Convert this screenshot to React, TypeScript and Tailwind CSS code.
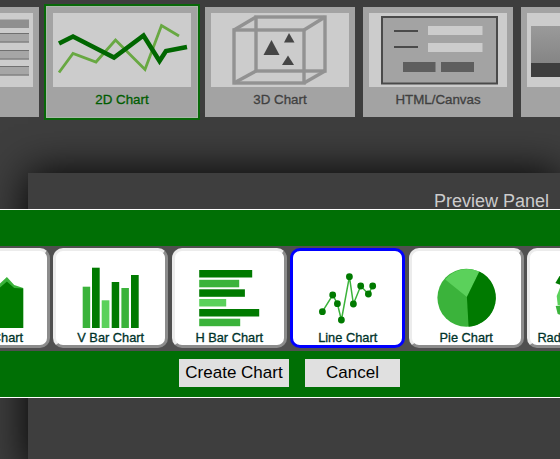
const DARK = "#007a00";
const MID = "#3bb33b";
const LIGHT = "#5bd15b";

function Chart2D() {
  return (
    <svg width={138} height={74} viewBox="53 13 138 74" className="block">
      <polyline points="59,72.5 73,53.5 96,62 115.5,40 145,69.5 161.5,25.5 179,36" fill="none" stroke="#68a842" strokeWidth={2.8} />
      <polyline points="59,43.5 73,36.5 114,57.5 143.5,35.5 159.5,61 166,51 187,47" fill="none" stroke="#006600" strokeWidth={4.6} />
    </svg>
  );
}

function Chart3D() {
  return (
    <svg width={138} height={74} viewBox="211 13 138 74" className="block">
      <g fill="none" stroke="#929292" strokeWidth={3.4}>
        <rect x={234} y={30} width={70} height={53} />
        <rect x={256} y={17} width={69} height={54} />
        <line x1={234} y1={30} x2={256} y2={17} />
        <line x1={304} y1={30} x2={325} y2={17} />
        <line x1={234} y1={83} x2={256} y2={71} />
        <line x1={304} y1={83} x2={325} y2={71} />
      </g>
      <g fill="#454545">
        <polygon points="263.5,55 279.5,55 271.5,40" />
        <polygon points="284,42.5 294.5,42.5 289,33" />
        <polygon points="282,65 294,65 288,55.5" />
      </g>
    </svg>
  );
}

function HtmlCanvas() {
  return (
    <svg width={138} height={74} viewBox="369 13 138 74" className="block">
      <rect x={382} y={17} width={115} height={66.5} fill="#a3a3a3" stroke="#4a4a4a" strokeWidth={2} />
      <line x1={394} y1={31} x2={418} y2={31} stroke="#4a4a4a" strokeWidth={2} />
      <line x1={394} y1={47} x2={418} y2={47} stroke="#4a4a4a" strokeWidth={2} />
      <rect x={428} y={26} width={54.5} height={9} fill="#cccccc" />
      <rect x={428} y={43} width={54.5} height={9} fill="#cccccc" />
      <rect x={403} y={62} width={32.5} height={10} fill="#5e5e5e" />
      <rect x={441} y={62} width={33} height={10} fill="#5e5e5e" />
    </svg>
  );
}

function Rows() {
  return (
    <svg width={138} height={74} viewBox="-105 13 138 74" className="block">
      <rect x={-105} y={19.5} width={134} height={8.5} fill="#8f8f8f" />
      {[33, 50, 66].map((y) => (
        <g key={y}>
          <rect x={-105} y={y} width={134} height={9.5} fill="#a6a6a6" />
          <line x1={-105} y1={y + 0.5} x2={29} y2={y + 0.5} stroke="#707070" />
          <line x1={-105} y1={y + 9} x2={29} y2={y + 9} stroke="#707070" />
        </g>
      ))}
    </svg>
  );
}

function Panels() {
  return (
    <svg width={138} height={74} viewBox="527 13 138 74" className="block">
      <defs>
        <linearGradient id="panelFill" x1="0" y1="0" x2="0" y2="1">
          <stop offset="0" stopColor="#9a9a9a" />
          <stop offset="1" stopColor="#858585" />
        </linearGradient>
      </defs>
      <rect x={531} y={26} width={130} height={37} fill="url(#panelFill)" />
      <rect x={531} y={63} width={130} height={14} fill="#3e3e3e" />
    </svg>
  );
}

type TopItem = { label: string; art: React.ReactNode; selected?: boolean };

const topItems: TopItem[] = [
  { label: "Table", art: <Rows /> },
  { label: "2D Chart", art: <Chart2D />, selected: true },
  { label: "3D Chart", art: <Chart3D /> },
  { label: "HTML/Canvas", art: <HtmlCanvas /> },
  { label: "Panels", art: <Panels /> },
];

function TopCard({ label, art, selected }: TopItem) {
  return (
    <div
      className={
        selected
          ? "w-[150px] h-[110px] shrink-0 bg-[#a3a3a3] p-[6px] shadow-[0_0_0_1px_#a9b9a9,0_0_0_3px_#086808]"
          : "w-[150px] h-[110px] shrink-0 bg-[#a3a3a3] p-[6px]"
      }
    >
      <div className="h-[74px] bg-[#cccccc] overflow-hidden">{art}</div>
      <div
        className={
          selected
            ? "mt-[5px] text-center text-[13.33px] leading-[16px] text-[#005c00] [-webkit-text-stroke:0.3px_#005c00]"
            : "mt-[5px] text-center text-[13.33px] leading-[16px] text-[#404040] [-webkit-text-stroke:0.3px_#404040]"
        }
      >
        {label}
      </div>
    </div>
  );
}

const icon = { width: 108.75, height: 80, className: "block" };

function AreaIcon() {
  return (
    <svg {...icon} viewBox="-62.2 251 108.75 80">
      <polygon points="-10,293 6.7,277 14,285 23,288 23,328 -10,328" fill={MID} />
      <polygon points="-10,296 6.7,281.5 14,288 23,288.5 23,328 -10,328" fill={DARK} />
    </svg>
  );
}

function VBarIcon() {
  const bars = [
    [83, 286.7, 7.5, MID],
    [92.3, 267.7, 7.7, DARK],
    [102, 300.3, 7.7, LIGHT],
    [112, 282, 7.5, DARK],
    [121.7, 288, 7.5, MID],
    [131.3, 275, 7.7, DARK],
  ] as const;
  return (
    <svg {...icon} viewBox="56.3 251 108.75 80">
      {bars.map(([x, y, w, c]) => (
        <rect key={x} x={x} y={y} width={w} height={328 - y} fill={c} />
      ))}
    </svg>
  );
}

function HBarIcon() {
  const bars = [
    [270, 252, DARK],
    [279.8, 239, MID],
    [289.3, 244.7, DARK],
    [299, 226, LIGHT],
    [309, 259, DARK],
    [318.7, 240, MID],
  ] as const;
  return (
    <svg {...icon} viewBox="174.8 251 108.75 80">
      {bars.map(([y, end, c]) => (
        <rect key={y} x={199} y={y} width={end - 199} height={7.5} fill={c} />
      ))}
    </svg>
  );
}

function LineIcon() {
  const pts = [
    [322.7, 311.7],
    [333, 295],
    [337.7, 303.7],
    [341.7, 320],
    [349.7, 276.7],
    [353.7, 304],
    [361, 286],
    [368.7, 294],
    [373, 286],
  ];
  return (
    <svg {...icon} viewBox="293.3 251 108.75 80">
      <polyline points={pts.map((p) => p.join(",")).join(" ")} fill="none" stroke={MID} strokeWidth={1.5} />
      {pts.map(([x, y]) => (
        <circle key={x} cx={x} cy={y} r={3.4} fill={DARK} />
      ))}
    </svg>
  );
}

function PieIcon() {
  return (
    <svg {...icon} viewBox="411.8 251 108.75 80">
      <circle cx={466.2} cy={297.8} r={29} fill={MID} />
      <path d="M466.7 297 L445 279.6 A29 29 0 0 1 479.2 271.6 Z" fill={LIGHT} />
      <path d="M466.7 297 L479.2 271.6 A29 29 0 0 1 468.4 326.7 Z" fill={DARK} />
    </svg>
  );
}

function RadarIcon() {
  return (
    <svg {...icon} viewBox="530.3 251 108.75 80">
      <polygon points="561,274 555.7,283 561,285" fill={DARK} />
      <polygon points="561,286 557,296 558,305 561,305" fill={LIGHT} />
      <polygon points="556,306 561,305.5 561,315 558,314" fill={MID} />
    </svg>
  );
}

const bottomItems = [
  { label: "Area Chart", art: <AreaIcon /> },
  { label: "V Bar Chart", art: <VBarIcon /> },
  { label: "H Bar Chart", art: <HBarIcon /> },
  { label: "Line Chart", art: <LineIcon />, selected: true },
  { label: "Pie Chart", art: <PieIcon /> },
  { label: "Radial Bar Chart", art: <RadarIcon /> },
];

export default function App() {
  return (
    <div className="w-[560px] h-[459px] overflow-hidden bg-[#3e3e3e] font-['Liberation_Sans',Arial,sans-serif]">
      <div className="flex gap-[8px] pt-[7px] ml-[-111px] w-max">
        {topItems.map((t) => (
          <TopCard key={t.label} {...t} />
        ))}
      </div>

      <div className="ml-[28px] mt-[56px] h-[300px] bg-[#3e3e3e] shadow-[0_0_40px_#000000]">
        <div className="h-[36px] flex justify-end items-end pr-[11px] text-[18px] leading-[20px] text-[#cccccc]">
          <span className="mb-[-2px]">Preview Panel</span>
        </div>
        <div className="ml-[-28px] w-[560px] h-[189px] bg-[#006f05] border-y border-white">
          <div className="mt-[36px] h-[105px] bg-[#505050] flex items-start gap-[3.75px] pt-[2px] ml-[-65.2px] w-[800px]">
            {bottomItems.map((b) => (
              <div
                key={b.label}
                className={
                  b.selected
                    ? "w-[114.75px] h-[100px] shrink-0 rounded-[10px] bg-white border-[3px] border-[#0000ff] overflow-hidden"
                    : "w-[114.75px] h-[100px] shrink-0 rounded-[10px] bg-white border-[3px] border-t-[#ececec] border-l-[#ececec] border-r-[#8c8c8c] border-b-[#8c8c8c] overflow-hidden"
                }
              >
                {b.art}
                <div className="text-center whitespace-nowrap text-[12.8px] leading-[14px] text-[#00332a] [-webkit-text-stroke:0.3px_#00332a]">{b.label}</div>
              </div>
            ))}
          </div>
          <div className="mt-[8px] flex">
            <button className="ml-[179px] w-[110px] h-[28px] bg-[#e0e0e0] text-[17px] leading-[28px] text-black">Create Chart</button>
            <button className="ml-[16px] w-[95px] h-[28px] bg-[#e0e0e0] text-[17px] leading-[28px] text-black">Cancel</button>
          </div>
        </div>
      </div>
    </div>
  );
}
